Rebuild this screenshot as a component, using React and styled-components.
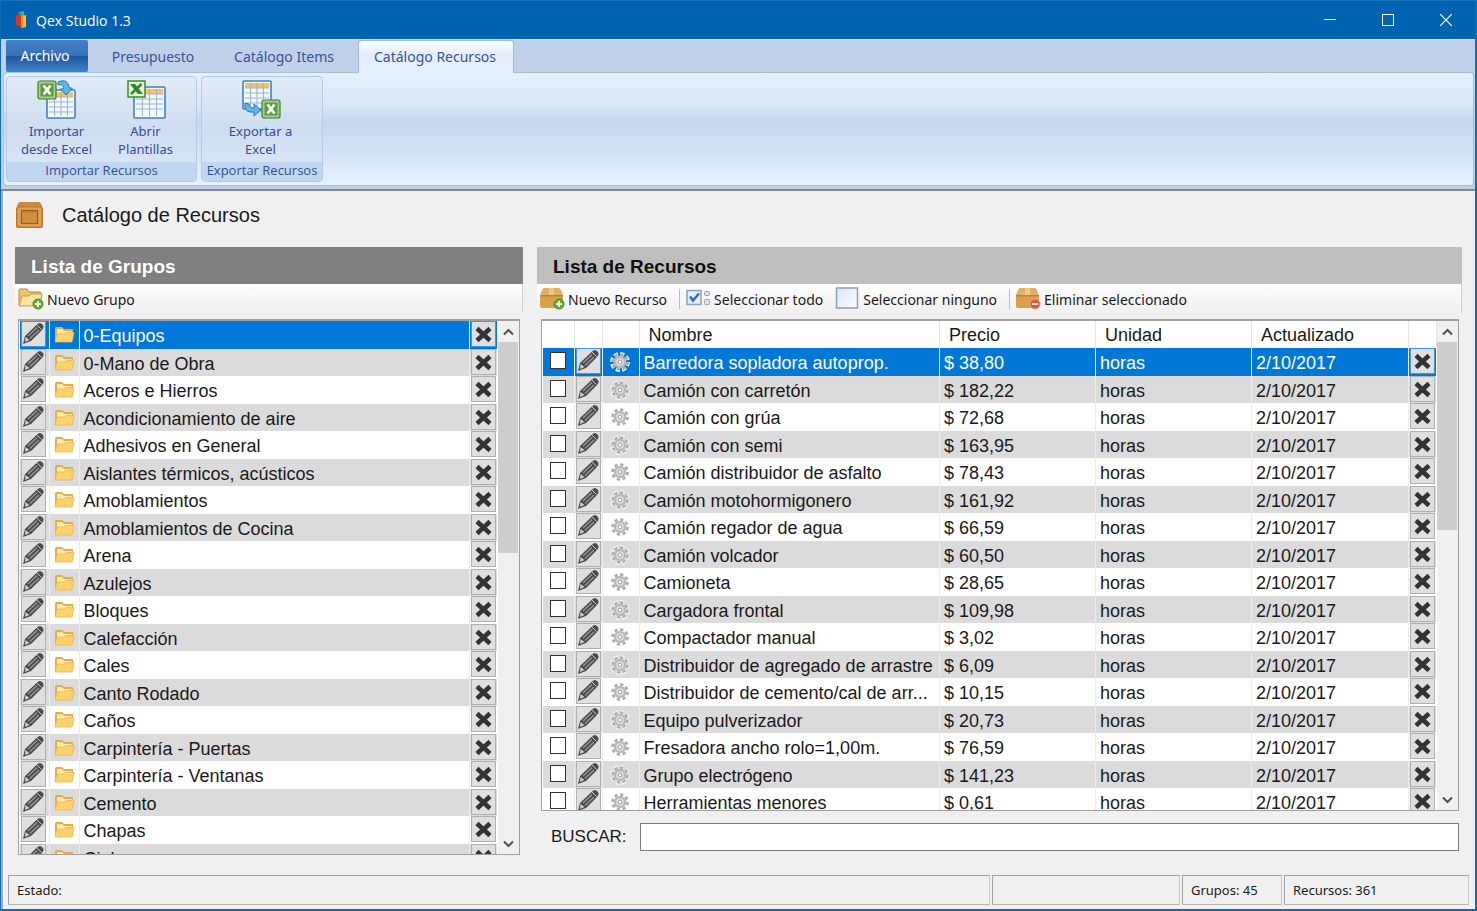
import React, { useState } from "react";
import styled, { createGlobalStyle, css } from "styled-components";

const GlobalStyle = createGlobalStyle`
  *, *::before, *::after { box-sizing: border-box; }
  html, body { margin: 0; padding: 0; }
  body { font-family: "Liberation Sans", Arial, sans-serif; color: #1a1a1a; }
  button, input { font: inherit; color: inherit; margin: 0; }
`;

const ui = css`font-family: "Noto Sans", "Segoe UI", sans-serif;`;
const uiNarrow = css`font-family: "Open Sans", "Segoe UI", sans-serif;`;

const Window = styled.div`
  display: flex;
  flex-direction: column;
  height: 100vh;
  min-height: 480px;
  border: solid #0f6cb0;
  border-width: 0 2px 2px 1px;
  background: #f0f0f0;
`;

const TitleBar = styled.header`
  ${uiNarrow}
  display: flex;
  align-items: center;
  height: 39px;
  flex: none;
  padding-left: 13px;
  background: #0063b1;
  border-top: 1px solid #1a73bb;
  color: #fff;
`;
const AppTitle = styled.h1`
  flex: 1;
  margin: 0 0 0 6px;
  font-size: 14px;
  font-weight: 400;
`;
const WindowButton = styled.button`
  display: grid;
  place-items: center;
  width: 58px;
  height: 38px;
  padding: 0;
  border: 0;
  background: none;
`;

const TabStrip = styled.nav`
  ${ui}
  display: flex;
  align-items: flex-end;
  height: 34px;
  flex: none;
  padding: 0 4px 0 5px;
  background: #bfd0e8;
  border-top: 1px solid #d3e2f5;
`;
const Tab = styled.button`
  height: 33px;
  padding: 0 2px 2px 0;
  width: ${(p) => p.$width}px;
  border: 1px solid transparent;
  border-bottom: 0;
  border-radius: 4px 4px 0 0;
  background: none;
  color: #3a539a;
  font-size: 14px;
  white-space: nowrap;
  ${(p) => p.$file && css`
    align-self: flex-start;
    height: 32px;
    margin-right: 8px;
    padding: 0 4px 2px 0;
    border-radius: 2px;
    color: #fff;
    background: linear-gradient(#4580c6 0, #3670b8 48%, #1f559f 50%, #3d86ca 100%);
  `}
  ${(p) => p.$active && css`
    border-color: #9ebbe2;
    background: linear-gradient(#fbfdff, #e4eefb 40%, #e6f0fc);
    position: relative;
    z-index: 1;
  `}
`;

const RibbonBack = styled.div`
  flex: none;
  padding-bottom: 3px;
  background: #bfd0e8;
  border-bottom: 2px solid #85898f;
`;
const Ribbon = styled.section`
  ${ui}
  display: flex;
  gap: 4px;
  flex: none;
  height: 114px;
  margin: -1px 1px 0 2px;
  padding: 3px 2px;
  border: 1px solid #a3bfe4;
  border-radius: 4px;
  background: linear-gradient(#e6f1fe 0, #dae7f7 28%, #c7d8ed 42%, #d3e3f6 70%, #e5f2ff 100%);
`;
const RibbonGroup = styled.div`
  display: flex;
  flex-direction: column;
  width: ${(p) => p.$width}px;
  border: 1px solid #b3cae8;
  border-radius: 4px;
  overflow: hidden;
  background: linear-gradient(#e3edf9, #cddcef 50%, #dceaf9);
`;
const RibbonTools = styled.div`
  display: flex;
  flex: 1;
  justify-content: ${(p) => (p.$center ? "center" : "flex-start")};
  padding: ${(p) => (p.$center ? "0 3px 0 0" : "0 5px")};
`;
const RibbonCaption = styled.div`
  ${uiNarrow}
  height: 19px;
  background: #c1d6f0;
  color: #34508f;
  font-size: 13px;
  line-height: 16px;
  text-align: center;
  white-space: nowrap;
`;
const RibbonButton = styled.button`
  display: flex;
  flex-direction: column;
  align-items: center;
  width: 89px;
  padding: 3px 0 0;
  border: 0;
  background: none;
  color: #34508f;
  font-size: 13px;
  line-height: 18px;
  white-space: pre-line;
  svg { margin-bottom: 2px; }
`;

const Content = styled.main`
  display: flex;
  flex-direction: column;
  flex: 1;
  min-height: 0;
  padding: 0 6px 4px;
  border-left: 2px solid #a7abb0;
`;
const Heading = styled.div`
  display: flex;
  align-items: center;
  gap: 19px;
  height: 56px;
  flex: none;
  padding: 0 7px 8px;
  h2 { margin: 0; font-size: 20px; font-weight: 400; }
`;
const Panels = styled.div`
  display: flex;
  gap: 14px;
  flex: 1;
  min-height: 0;
  padding: 0 7px 0 6px;
`;
const Panel = styled.section`
  display: flex;
  flex-direction: column;
  min-width: 0;
  flex: ${(p) => p.$flex};
`;
const PanelTitle = styled.h3`
  flex: none;
  height: 37px;
  margin: 0;
  padding: 3px 16px 0;
  font-size: 19px;
  line-height: 34px;
  color: ${(p) => (p.$dark ? "#fff" : "#111")};
  background: ${(p) => (p.$dark ? "#808080" : "#bfbfbf")};
`;
const ToolBar = styled.div`
  ${ui}
  display: flex;
  align-items: center;
  flex: none;
  height: 29px;
  margin-bottom: 6px;
  padding: 1px 0 0 3px;
  border-right: 1px solid #d0d0d0;
  background: linear-gradient(#fdfdfd, #f0f0f0);
`;
const ToolButton = styled.button`
  display: flex;
  align-items: center;
  gap: 3px;
  height: 28px;
  padding: 0;
  margin-right: 12px;
  border: 0;
  background: none;
  font-size: 14px;
  white-space: nowrap;
`;
const Separator = styled.span`
  width: 1px;
  height: 20px;
  margin-right: 6px;
  background: #bdbdbd;
`;

const Grid = styled.div`
  display: flex;
  flex: 1;
  min-height: 0;
  margin: 0 3px ${(p) => p.$bottom}px ${(p) => p.$left}px;
  border: 1px solid #a0a0a0;
  border-top-width: 2px;
  background: #fff;
  overflow: hidden;
`;
const GridBody = styled.div`
  flex: 1;
  min-width: 0;
  padding-left: 1px;
  overflow: hidden;
`;
const Table = styled.table`
  width: 100%;
  table-layout: fixed;
  border-collapse: collapse;
  font-size: 18px;
  line-height: 20px;
`;
const HeadCell = styled.th`
  height: 27px;
  padding: 0 9px;
  border-right: 1px solid #e5e5e5;
  font-weight: 400;
  text-align: left;
`;
const Cell = styled.td`
  padding: ${(p) => (p.$tight ? "0 1px" : "2px 4px 0")};
  border-right: 1px solid ${(p) => (p.$plain ? "transparent" : "#ececec")};
  overflow: hidden;
  text-overflow: ellipsis;
  white-space: nowrap;
  vertical-align: ${(p) => (p.$top ? "top" : "middle")};
  svg { display: block; margin: 0 auto; }
`;
const Row = styled.tr`
  height: 27px;
  &:nth-child(odd) { height: 28px; }
  &:nth-child(even) { background: #dbdbdb; }
  ${(p) => p.$selected && css`background: #0078d7; color: #fff;`}
`;
const CellButton = styled.button`
  display: grid;
  place-items: center;
  width: 25px;
  height: 26px;
  padding: 0;
  border: 1px solid ${(p) => (p.$selected ? "#3f97df" : "#b0b0b0")};
  background: #dfdfdf;
`;
const Tick = styled.input`
  appearance: none;
  display: block;
  width: 16px;
  height: 17px;
  margin: 4px 0 0 6px;
  border: 1px solid #333;
  background: #fff;
  &:checked { background: #0078d7; box-shadow: inset 0 0 0 3px #fff; }
`;

const ScrollTrack = styled.div`
  display: flex;
  flex-direction: column;
  flex: none;
  width: 21px;
  background: #f0f0f0;
`;
const ScrollButton = styled.button`
  display: grid;
  place-items: center;
  height: 21px;
  padding: 0;
  border: 0;
  background: #f0f0f0;
`;
const ScrollRoom = styled.div`flex: 1;`;
const ScrollThumb = styled.div`
  height: ${(p) => p.$size}%;
  margin-right: 1px;
  background: #cdcdcd;
`;

const Search = styled.label`
  display: flex;
  align-items: center;
  flex: none;
  gap: 13px;
  margin: 0 3px 24px 14px;
  font-size: 17px;
`;
const SearchInput = styled.input`
  flex: 1;
  height: 28px;
  padding: 2px 6px;
  border: 1px solid #7a7a7a;
  background: #fff;
`;

const StatusBar = styled.footer`
  ${ui}
  display: flex;
  gap: 2px;
  flex: none;
  height: 30px;
  margin-left: -1px;
  font-size: 13px;
`;
const StatusCell = styled.div`
  flex: ${(p) => (p.$width ? `0 0 ${p.$width}px` : "1")};
  padding: 0 8px;
  border: 1px solid #a5a5a5;
  border-right-color: #c8c8c8;
  border-bottom-color: #b9b4b2;
  line-height: 28px;
  white-space: nowrap;
`;

const AppLogo = () => (
  <svg width="16" height="18" viewBox="0 0 16 18" aria-hidden="true">
    <path d="M5 1l5-1v6H5z" fill="#25b5b0" />
    <path d="M2 4l5-1v13l-5-2z" fill="#d9342b" />
    <path d="M7 5l5-1v12l-5 1z" fill="#f5c51c" />
    <path d="M7 5h2v12H7z" fill="#f08a24" />
  </svg>
);

const Sheet = ({ x, y, w, h }) => (
  <g>
    <rect x={x} y={y} width={w} height={h} rx="1" fill="#eef9ff" stroke="#3e84b8" strokeWidth="1.6" />
    <rect x={x + 2} y={y + 2} width={w - 4} height="5" fill="#f7c062" />
    <path
      d={`M${x + 2} ${y + 7}h${w - 4}M${x + 2} ${y + 12}h${w - 4}M${x + 2} ${y + 17}h${w - 4}M${x + 2} ${y + 22}h${w - 4}M${x + w * 0.27} ${y + 2}v${h - 4}M${x + w * 0.5} ${y + 2}v${h - 4}M${x + w * 0.73} ${y + 2}v${h - 4}`}
      stroke="#a5b4c8" strokeWidth="1.1" fill="none"
    />
  </g>
);
const ExcelMark = ({ x, y }) => (
  <g transform={`translate(${x} ${y})`}>
    <rect x="1" y="1" width="18" height="18" rx="2" fill="#a9cf90" stroke="#3d7b2d" strokeWidth="1.2" />
    <rect x="3.5" y="3.500" width="13" height="13" fill="#5f9b45" />
    <path d="M6.500 5.500l7 9M13.500 5.500l-7 9" stroke="#fff" strokeWidth="2.800" />
  </g>
);
const ImportIcon = () => (
  <svg width="40" height="40" viewBox="0 0 40 40" aria-hidden="true">
    <Sheet x={10} y={10} w={28} h={28} />
    <ExcelMark x={0} y={0} />
    <path d="M21 2c7-3 11 0 11 6h3.500L29 15l-6-6h3.500c0-4-2-5-5.500-4z" fill="#62b5e8" stroke="#2878b0" />
  </svg>
);
const TemplateIcon = () => (
  <svg width="40" height="40" viewBox="0 0 40 40" aria-hidden="true">
    <Sheet x={8} y={7} w={31} h={31} />
    <rect x="2" y="1" width="17" height="16" fill="#e3f2d6" stroke="#3d8b2d" strokeWidth="1.500" />
    <path d="M4 4h5l8 10h-5z" fill="#2f8a25" />
    <path d="M15.500 4L5 14" stroke="#2f8a25" strokeWidth="2.500" />
  </svg>
);
const ExportIcon = () => (
  <svg width="40" height="40" viewBox="0 0 40 40" aria-hidden="true">
    <Sheet x={2} y={1} w={28} h={28} />
    <ExcelMark x={20} y={19} />
    <path d="M4 23l4 1c0 3 2 4 5 4v-4l7 6-7 6v-4c-7 1-10-3-9-9z" fill="#62b5e8" stroke="#2878b0" />
  </svg>
);
const CrateIcon = () => (
  <svg width="27" height="28" viewBox="0 0 27 28" aria-hidden="true">
    <path d="M5 1h17q2 0 3 2l2 5v17q0 2-2 2H2q-2 0-2-2V8l2-5q1-2 3-2z" fill="#b8732c" />
    <path d="M5 1h17q2 0 3 2l1 3H1l1-3q1-2 3-2z" fill="#c98a43" />
    <rect x="1" y="6" width="25" height="20" rx="2" fill="#dda054" stroke="#bd7a33" />
    <rect x="5.500" y="9.500" width="16" height="13" fill="#cf8f44" stroke="#9c5f22" strokeWidth="1.200" />
    <path d="M7 11h13" stroke="#b8762f" />
  </svg>
);
const Badge = ({ minus, x, y }) => (
  <g transform={`translate(${x} ${y})`}>
    <circle r="5" fill={minus ? "#e4573f" : "#62ae2c"} stroke={minus ? "#f09a86" : "#4a8d1e"} />
    <path d={minus ? "M-3 0h6" : "M-3 0h6M0-3v6"} stroke="#fff" strokeWidth="1.8" />
  </g>
);
const FolderAddIcon = () => (
  <svg width="26" height="22" viewBox="0 0 26 22" aria-hidden="true">
    <path d="M1 17V2q0-1 1-1h7l2 3h11q1 0 1 1v3" fill="#ecc76c" stroke="#b98b35" />
    <path d="M1 18l3-10h7l2-2h11l-2 12z" fill="#fae3a0" stroke="#c79b45" />
    <Badge x={20} y={16} />
  </svg>
);
const BoxIcon = ({ minus }) => (
  <svg width="25" height="22" viewBox="0 0 25 22" aria-hidden="true">
    <path d="M4 0h15q1 0 2 2l2 5H0l2-5q1-2 2-2z" fill="#dfb066" />
    <path d="M0 7h23v11q0 2-2 2H2q-2 0-2-2z" fill="#dba24c" />
    <path d="M0 7h23v1.500H0z" fill="#bd8433" />
    <path d="M9 0h5v7H9z" fill="#ecc98b" />
    <Badge x={19} y={16} minus={minus} />
  </svg>
);
const SelectAllIcon = () => (
  <svg width="25" height="20" viewBox="0 0 25 20" aria-hidden="true">
    <rect x="1" y="1.500" width="14" height="14" fill="#e2edf8" stroke="#8ba3bc" strokeWidth="1.500" />
    <path d="M4 7.500l3 4 6-7" fill="none" stroke="#2773bd" strokeWidth="2.500" />
    <rect x="18.500" y="2.500" width="5" height="4" rx="1" fill="#dbe4ee" stroke="#93a3b4" />
    <rect x="18.500" y="10.500" width="5" height="5" rx="1" fill="#dbe4ee" stroke="#93a3b4" />
  </svg>
);
const SelectNoneIcon = () => (
  <svg width="25" height="24" viewBox="0 0 25 24" aria-hidden="true">
    <defs>
      <linearGradient id="blank" x1="0" y1="0" x2="1" y2="1">
        <stop offset="0" stopColor="#dbe6f3" /><stop offset="1" stopColor="#fbfdff" />
      </linearGradient>
    </defs>
    <rect x="1.500" y="1" width="21" height="20" fill="url(#blank)" stroke="#8ea2b8" strokeWidth="1.500" />
  </svg>
);
const PencilIcon = () => (
  <svg width="23" height="24" viewBox="0 0 23 24" aria-hidden="true">
    <path d="M1 22l2-8L14.500 3q2-2 3.500-2 2.500.5 3.500 3 .5 2-1.500 4L9 19z" fill="#4c4c4c" />
    <path d="M6 14L15 5.500M8 16.500l9-8.500" stroke="#9c9c9c" strokeWidth="1.200" />
    <path d="M15 3l4.500 4.500" stroke="#c8c8c8" strokeWidth="1" />
    <path d="M3.500 15l4 3-4.500 2z" fill="#cfcfcf" />
  </svg>
);
const CrossIcon = () => (
  <svg width="19" height="19" viewBox="0 0 19 19" aria-hidden="true">
    <path d="M3 3.500l13 12M16 3.500L3 15.500" stroke="#333" strokeWidth="4.500" />
  </svg>
);
const FolderIcon = () => (
  <svg width="21" height="18" viewBox="0 0 21 18" aria-hidden="true">
    <path d="M1 15V2.500L2 1h6l2 2h9v11z" fill="#e9ad3d" />
    <path d="M3 3h5l2 2h8v4H3z" fill="#ffebb5" />
    <path d="M1 16l2-8h7l2-1.500h8L18 16z" fill="#ffd26a" stroke="#edb54a" strokeWidth=".8" />
  </svg>
);
const GearIcon = () => (
  <svg width="22" height="22" viewBox="0 0 22 22" aria-hidden="true">
    <circle cx="10" cy="11" r="8" fill="none" stroke="#f8f8f8" strokeWidth="4" strokeDasharray="4 2.280" />
    <circle cx="10" cy="11" r="7.500" fill="none" stroke="#a8a8a8" strokeWidth="2.500" strokeDasharray="3 2.890" />
    <circle cx="10" cy="11" r="5" fill="#e3e3e3" stroke="#bababa" strokeWidth="2.500" />
    <circle cx="10" cy="11" r="2" fill="#fff" stroke="#999" />
  </svg>
);
const Chevron = ({ down }) => (
  <svg width="11" height="8" viewBox="0 0 11 8" aria-hidden="true">
    <path d={down ? "M1 1.500l4.500 4.500L10 1.500" : "M1 6.500L5.500 2 10 6.500"} fill="none" stroke="#505050" strokeWidth="2" />
  </svg>
);

const Scrollbar = ({ size }) => (
  <ScrollTrack>
    <ScrollButton aria-label="Subir"><Chevron /></ScrollButton>
    <ScrollRoom><ScrollThumb $size={size} /></ScrollRoom>
    <ScrollButton aria-label="Bajar"><Chevron down /></ScrollButton>
  </ScrollTrack>
);

const groups = [
  "0-Equipos", "0-Mano de Obra", "Aceros e Hierros", "Acondicionamiento de aire", "Adhesivos en General",
  "Aislantes térmicos, acústicos", "Amoblamientos", "Amoblamientos de Cocina", "Arena", "Azulejos", "Bloques",
  "Calefacción", "Cales", "Canto Rodado", "Caños", "Carpintería - Puertas", "Carpintería - Ventanas", "Cemento",
  "Chapas", "Cielos",
];
const resources = [
  ["Barredora sopladora autoprop.", "38,80"], ["Camión con carretón", "182,22"], ["Camión con grúa", "72,68"],
  ["Camión con semi", "163,95"], ["Camión distribuidor de asfalto", "78,43"], ["Camión motohormigonero", "161,92"],
  ["Camión regador de agua", "66,59"], ["Camión volcador", "60,50"], ["Camioneta", "28,65"],
  ["Cargadora frontal", "109,98"], ["Compactador manual", "3,02"], ["Distribuidor de agregado de arrastre", "6,09"],
  ["Distribuidor de cemento/cal de arr...", "10,15"], ["Equipo pulverizador", "20,73"],
  ["Fresadora ancho rolo=1,00m.", "76,59"], ["Grupo electrógeno", "141,23"], ["Herramientas menores", "0,61"],
];

export default function App() {
  const [query, setQuery] = useState("");
  return (
    <>
      <GlobalStyle />
      <Window>
        <TitleBar>
          <AppLogo />
          <AppTitle>Qex Studio 1.3</AppTitle>
          <WindowButton aria-label="Minimizar">
            <svg width="12" height="12"><path d="M0 5.500h12" stroke="#fff" /></svg>
          </WindowButton>
          <WindowButton aria-label="Maximizar">
            <svg width="12" height="12"><rect x=".5" y=".5" width="11" height="11" fill="none" stroke="#fff" /></svg>
          </WindowButton>
          <WindowButton aria-label="Cerrar">
            <svg width="12" height="12"><path d="M0 0l12 12M12 0L0 12" stroke="#fff" strokeWidth="1.200" /></svg>
          </WindowButton>
        </TitleBar>
        <TabStrip>
          <Tab $file $width={82}>Archivo</Tab>
          <Tab $width={116}>Presupuesto</Tab>
          <Tab $width={146}>Catálogo Items</Tab>
          <Tab $active $width={156}>Catálogo Recursos</Tab>
        </TabStrip>
        <RibbonBack>
          <Ribbon>
            <RibbonGroup $width={191}>
              <RibbonTools>
                <RibbonButton><ImportIcon />{"Importar\ndesde Excel"}</RibbonButton>
                <RibbonButton><TemplateIcon />{"Abrir\nPlantillas"}</RibbonButton>
              </RibbonTools>
              <RibbonCaption>Importar Recursos</RibbonCaption>
            </RibbonGroup>
            <RibbonGroup $width={122}>
              <RibbonTools $center>
                <RibbonButton><ExportIcon />{"Exportar a\nExcel"}</RibbonButton>
              </RibbonTools>
              <RibbonCaption>Exportar Recursos</RibbonCaption>
            </RibbonGroup>
          </Ribbon>
        </RibbonBack>
        <Content>
          <Heading><CrateIcon /><h2>Catálogo de Recursos</h2></Heading>
          <Panels>
            <Panel $flex="508 1 0">
              <PanelTitle $dark>Lista de Grupos</PanelTitle>
              <ToolBar>
                <ToolButton><FolderAddIcon />Nuevo Grupo</ToolButton>
              </ToolBar>
              <Grid $left={3} $bottom={20}>
                <GridBody>
                  <Table>
                    <colgroup><col width="29" /><col width="30" /><col /><col width="28" /></colgroup>
                    <tbody>
                      {groups.map((name, i) => (
                        <Row key={name} $selected={i === 0}>
                          <Cell $tight $top><CellButton $selected={i === 0} aria-label={`Editar ${name}`}><PencilIcon /></CellButton></Cell>
                          <Cell $tight><FolderIcon /></Cell>
                          <Cell>{name}</Cell>
                          <Cell $tight $top $plain><CellButton $selected={i === 0} aria-label={`Eliminar ${name}`}><CrossIcon /></CellButton></Cell>
                        </Row>
                      ))}
                    </tbody>
                  </Table>
                </GridBody>
                <Scrollbar size={43} />
              </Grid>
            </Panel>
            <Panel $flex="925 1 0">
              <PanelTitle>Lista de Recursos</PanelTitle>
              <ToolBar>
                <ToolButton><BoxIcon />Nuevo Recurso</ToolButton>
                <Separator />
                <ToolButton><SelectAllIcon />Seleccionar todo</ToolButton>
                <ToolButton><SelectNoneIcon />Seleccionar ninguno</ToolButton>
                <Separator />
                <ToolButton><BoxIcon minus />Eliminar seleccionado</ToolButton>
              </ToolBar>
              <Grid $left={4} $bottom={12}>
                <GridBody>
                  <Table>
                    <colgroup>
                      <col width="31" /><col width="28" /><col width="37" /><col />
                      <col width="156" /><col width="156" /><col width="157" /><col width="28" />
                    </colgroup>
                    <thead>
                      <tr>
                        <HeadCell /><HeadCell /><HeadCell />
                        <HeadCell>Nombre</HeadCell><HeadCell>Precio</HeadCell><HeadCell>Unidad</HeadCell>
                        <HeadCell>Actualizado</HeadCell><HeadCell />
                      </tr>
                    </thead>
                    <tbody>
                      {resources.map(([name, price], i) => (
                        <Row key={name} $selected={i === 0}>
                          <Cell $tight $top><Tick type="checkbox" aria-label={`Seleccionar ${name}`} /></Cell>
                          <Cell $tight $top><CellButton $selected={i === 0} aria-label={`Editar ${name}`}><PencilIcon /></CellButton></Cell>
                          <Cell $tight><GearIcon /></Cell>
                          <Cell>{name}</Cell>
                          <Cell>$ {price}</Cell>
                          <Cell>horas</Cell>
                          <Cell>2/10/2017</Cell>
                          <Cell $tight $top $plain><CellButton $selected={i === 0} aria-label={`Eliminar ${name}`}><CrossIcon /></CellButton></Cell>
                        </Row>
                      ))}
                    </tbody>
                  </Table>
                </GridBody>
                <Scrollbar size={42} />
              </Grid>
              <Search>
                BUSCAR:
                <SearchInput type="text" value={query} onChange={(e) => setQuery(e.target.value)} />
              </Search>
            </Panel>
          </Panels>
          <StatusBar>
            <StatusCell>Estado:</StatusCell>
            <StatusCell $width={188} />
            <StatusCell $width={100}>Grupos: 45</StatusCell>
            <StatusCell $width={185}>Recursos: 361</StatusCell>
          </StatusBar>
        </Content>
      </Window>
    </>
  );
}
